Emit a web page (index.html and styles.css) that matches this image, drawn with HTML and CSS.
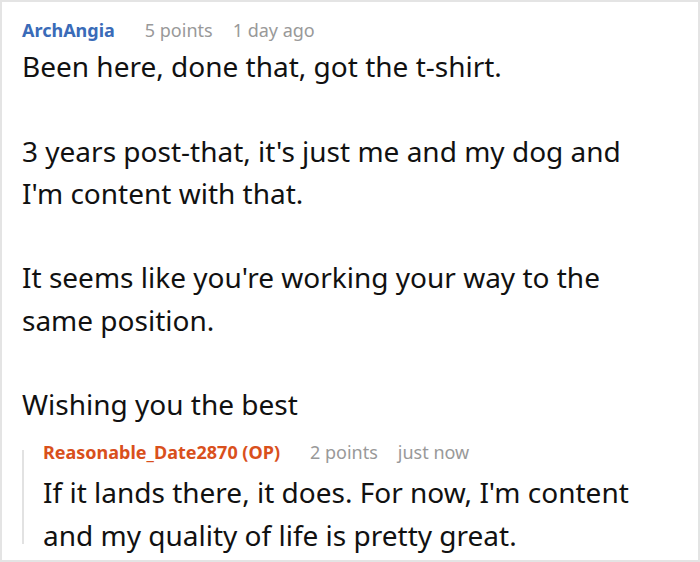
FILE: index.html
```html
<!DOCTYPE html>
<html>
<head>
<meta charset="utf-8">
<link rel="stylesheet" href="styles.css">
</head>
<body>
<div class="frame">
  <div class="comment">
    <div class="meta">
      <span class="author">ArchAngia</span>
      <span class="info">5 points</span>
      <span class="info">1 day ago</span>
    </div>
    <div class="body main-body">
      <p>Been here, done that, got the t-shirt.</p>
      <p>3 years post-that, it's just me and my dog and<br>I'm content with that.</p>
      <p>It seems like you're working your way to the<br>same position.</p>
      <p>Wishing you the best</p>
    </div>
    <div class="reply">
      <div class="meta reply-meta">
        <span class="author op">Reasonable_Date2870 (OP)</span>
        <span class="info">2 points</span>
        <span class="info">just now</span>
      </div>
      <div class="body reply-body">
        <p>If it lands there, it does. For now, I'm content<br>and my quality of life is pretty great.</p>
      </div>
    </div>
  </div>
</div>
</body>
</html>
```

FILE: styles.css
```css
html, body {
  margin: 0;
  padding: 0;
  background: #fff;
}
.frame {
  width: 700px;
  height: 562px;
  box-sizing: border-box;
  border: 2px solid #e4e4e4;
  overflow: hidden;
  font-family: "Noto Sans", "Open Sans", sans-serif;
  color: #111;
}
.comment {
  padding: 16px 0 0 20px;
}
.meta {
  display: flex;
  align-items: baseline;
  gap: 20px;
  height: 26px;
  font-size: 18px;
}
.author {
  font-weight: bold;
  color: #3a6bb8;
  margin-right: 10px;
}
.info {
  color: #999;
}
.body {
  font-size: 28px;
  line-height: 42.25px;
}
.main-body {
  padding-top: 1px;
}
.body p {
  margin: 0 0 42.25px 0;
}
.body p:last-child {
  margin-bottom: 0;
}
.reply {
  display: flow-root;
  margin-top: 25px;
  border-left: 2px solid #e2e2e2;
  padding-left: 19px;
}
.reply-meta {
  height: 17px;
  line-height: 17px;
  margin-top: -6px;
}
.author.op {
  color: #d9501c;
}
.reply-body {
  margin-top: 10px;
  margin-bottom: -12px;
}
```
